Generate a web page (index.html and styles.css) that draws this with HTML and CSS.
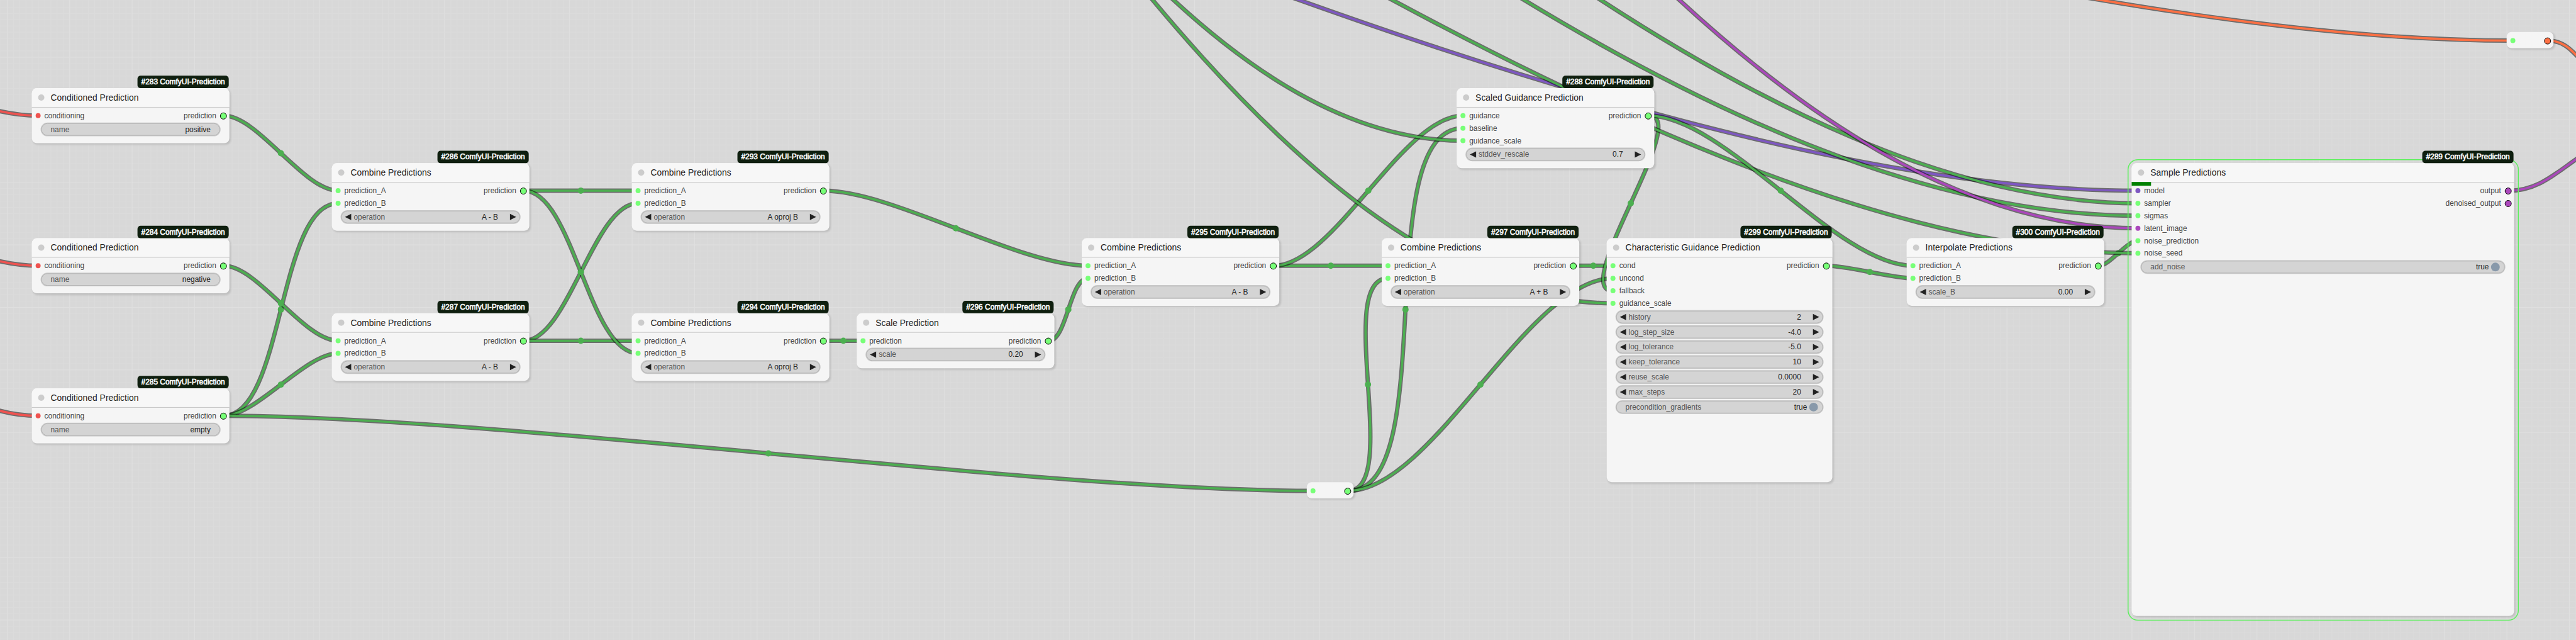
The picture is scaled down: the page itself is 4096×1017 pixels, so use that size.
FILE: index.html
```html
<!DOCTYPE html>
<html lang="en">
<head>
<meta charset="utf-8">
<title>Node graph</title>
<link rel="stylesheet" href="styles.css">
</head>
<body>
<main class="graph">
  <svg class="links" id="links" width="4124" height="1026"></svg>

  <section class="node n283">
    <span class="badge">#283 ComfyUI-Prediction</span>
    <h2 class="title">Conditioned Prediction</h2>
    <div class="body">
      <div class="slots"><ul class="inputs"><li class="cond">conditioning</li></ul><ul class="outputs"><li>prediction</li></ul></div>
      <div class="widgets"><div class="widget text"><span>name</span><b>positive</b></div></div>
    </div>
  </section>

  <section class="node n284">
    <span class="badge">#284 ComfyUI-Prediction</span>
    <h2 class="title">Conditioned Prediction</h2>
    <div class="body">
      <div class="slots"><ul class="inputs"><li class="cond">conditioning</li></ul><ul class="outputs"><li>prediction</li></ul></div>
      <div class="widgets"><div class="widget text"><span>name</span><b>negative</b></div></div>
    </div>
  </section>

  <section class="node n285">
    <span class="badge">#285 ComfyUI-Prediction</span>
    <h2 class="title">Conditioned Prediction</h2>
    <div class="body">
      <div class="slots"><ul class="inputs"><li class="cond">conditioning</li></ul><ul class="outputs"><li>prediction</li></ul></div>
      <div class="widgets"><div class="widget text"><span>name</span><b>empty</b></div></div>
    </div>
  </section>

  <section class="node n286">
    <span class="badge">#286 ComfyUI-Prediction</span>
    <h2 class="title">Combine Predictions</h2>
    <div class="body">
      <div class="slots"><ul class="inputs"><li>prediction_A</li><li>prediction_B</li></ul><ul class="outputs"><li>prediction</li></ul></div>
      <div class="widgets"><div class="widget stepper"><span>operation</span><b>A - B</b></div></div>
    </div>
  </section>

  <section class="node n287">
    <span class="badge">#287 ComfyUI-Prediction</span>
    <h2 class="title">Combine Predictions</h2>
    <div class="body">
      <div class="slots"><ul class="inputs"><li>prediction_A</li><li>prediction_B</li></ul><ul class="outputs"><li>prediction</li></ul></div>
      <div class="widgets"><div class="widget stepper"><span>operation</span><b>A - B</b></div></div>
    </div>
  </section>

  <section class="node n293">
    <span class="badge">#293 ComfyUI-Prediction</span>
    <h2 class="title">Combine Predictions</h2>
    <div class="body">
      <div class="slots"><ul class="inputs"><li>prediction_A</li><li>prediction_B</li></ul><ul class="outputs"><li>prediction</li></ul></div>
      <div class="widgets"><div class="widget stepper"><span>operation</span><b>A oproj B</b></div></div>
    </div>
  </section>

  <section class="node n294">
    <span class="badge">#294 ComfyUI-Prediction</span>
    <h2 class="title">Combine Predictions</h2>
    <div class="body">
      <div class="slots"><ul class="inputs"><li>prediction_A</li><li>prediction_B</li></ul><ul class="outputs"><li>prediction</li></ul></div>
      <div class="widgets"><div class="widget stepper"><span>operation</span><b>A oproj B</b></div></div>
    </div>
  </section>

  <section class="node n296">
    <span class="badge">#296 ComfyUI-Prediction</span>
    <h2 class="title">Scale Prediction</h2>
    <div class="body">
      <div class="slots"><ul class="inputs"><li>prediction</li></ul><ul class="outputs"><li>prediction</li></ul></div>
      <div class="widgets"><div class="widget stepper"><span>scale</span><b>0.20</b></div></div>
    </div>
  </section>

  <section class="node n295">
    <span class="badge">#295 ComfyUI-Prediction</span>
    <h2 class="title">Combine Predictions</h2>
    <div class="body">
      <div class="slots"><ul class="inputs"><li>prediction_A</li><li>prediction_B</li></ul><ul class="outputs"><li>prediction</li></ul></div>
      <div class="widgets"><div class="widget stepper"><span>operation</span><b>A - B</b></div></div>
    </div>
  </section>

  <section class="node reroute r1">
    <div class="body"><div class="slots"><ul class="inputs"><li></li></ul><ul class="outputs"><li></li></ul></div></div>
  </section>

  <section class="node n297">
    <span class="badge">#297 ComfyUI-Prediction</span>
    <h2 class="title">Combine Predictions</h2>
    <div class="body">
      <div class="slots"><ul class="inputs"><li>prediction_A</li><li>prediction_B</li></ul><ul class="outputs"><li>prediction</li></ul></div>
      <div class="widgets"><div class="widget stepper"><span>operation</span><b>A + B</b></div></div>
    </div>
  </section>

  <section class="node n288">
    <span class="badge">#288 ComfyUI-Prediction</span>
    <h2 class="title">Scaled Guidance Prediction</h2>
    <div class="body">
      <div class="slots"><ul class="inputs"><li>guidance</li><li>baseline</li><li>guidance_scale</li></ul><ul class="outputs"><li>prediction</li></ul></div>
      <div class="widgets"><div class="widget stepper"><span>stddev_rescale</span><b>0.7</b></div></div>
    </div>
  </section>

  <section class="node n299">
    <span class="badge">#299 ComfyUI-Prediction</span>
    <h2 class="title">Characteristic Guidance Prediction</h2>
    <div class="body">
      <div class="slots"><ul class="inputs"><li>cond</li><li>uncond</li><li>fallback</li><li>guidance_scale</li></ul><ul class="outputs"><li>prediction</li></ul></div>
      <div class="widgets">
        <div class="widget stepper"><span>history</span><b>2</b></div>
        <div class="widget stepper"><span>log_step_size</span><b>-4.0</b></div>
        <div class="widget stepper"><span>log_tolerance</span><b>-5.0</b></div>
        <div class="widget stepper"><span>keep_tolerance</span><b>10</b></div>
        <div class="widget stepper"><span>reuse_scale</span><b>0.0000</b></div>
        <div class="widget stepper"><span>max_steps</span><b>20</b></div>
        <div class="widget toggle"><span>precondition_gradients</span><b>true</b></div>
      </div>
    </div>
  </section>

  <section class="node n300">
    <span class="badge">#300 ComfyUI-Prediction</span>
    <h2 class="title">Interpolate Predictions</h2>
    <div class="body">
      <div class="slots"><ul class="inputs"><li>prediction_A</li><li>prediction_B</li></ul><ul class="outputs"><li>prediction</li></ul></div>
      <div class="widgets"><div class="widget stepper"><span>scale_B</span><b>0.00</b></div></div>
    </div>
  </section>

  <section class="node n289">
    <i class="selection"></i>
    <span class="badge">#289 ComfyUI-Prediction</span>
    <h2 class="title">Sample Predictions</h2>
    <div class="body">
      <i class="progress"></i>
      <div class="slots">
        <ul class="inputs"><li class="model">model</li><li>sampler</li><li>sigmas</li><li class="latent">latent_image</li><li>noise_prediction</li><li>noise_seed</li></ul>
        <ul class="outputs"><li class="latent">output</li><li class="latent">denoised_output</li></ul>
      </div>
      <div class="widgets"><div class="widget toggle"><span>add_noise</span><b>true</b></div></div>
    </div>
  </section>

  <section class="node reroute r2">
    <div class="body"><div class="slots"><ul class="inputs"><li></li></ul><ul class="outputs"><li class="vae"></li></ul></div></div>
  </section>
</main>
<script src="script.js"></script>
</body>
</html>
```
FILE: styles.css
```css
* { box-sizing: border-box; }

body {
  margin: 0;
  overflow: hidden;
  background: #d8d8d8;
  font-family: "Liberation Sans", Arial, sans-serif;
}

ul, h2 { margin: 0; padding: 0; list-style: none; font-weight: normal; }
b { font-weight: normal; }

/* The canvas is drawn at the current zoom level. */
.graph {
  position: relative;
  width: 4124px;
  height: 1026px;
  transform: scale(0.99369);
  transform-origin: 0 0;
  background-color: #d8d8d8;
  background-image:
    linear-gradient(to right, #dfdfdf 1px, transparent 1px),
    linear-gradient(to bottom, #dfdfdf 1px, transparent 1px),
    linear-gradient(to right, #dbdbdb 1px, transparent 1px),
    linear-gradient(to bottom, #dbdbdb 1px, transparent 1px);
  background-size: 100px 100px, 100px 100px, 10px 10px, 10px 10px;
  background-position: 11px 91px, 11px 91px, 1px 1px, 1px 1px;
}

.links { position: absolute; left: 0; top: 0; fill: none; }
.links .shadow { stroke: #000; stroke-opacity: .5; stroke-width: 7; }
.links .line { stroke: currentColor; stroke-width: 3.5; }
.links circle { fill: currentColor; }
.links .green { color: #4caf50; }
.links .red { color: #ef5350; }
.links .purple { color: #7e57c2; }
.links .pink { color: #ab47bc; }
.links .orange { color: #ff7043; }

.node {
  position: absolute;
  display: flex;
  flex-direction: column;
  width: 316px;
  background: #f5f5f5;
  border-radius: 8px;
  box-shadow: 2px 2px 3px rgba(0, 0, 0, .12);
}

.n283 { left: 51px; top: 141px; height: 88px; }
.n284 { left: 51px; top: 381px; height: 88px; }
.n285 { left: 51px; top: 621px; height: 88px; }
.n286 { left: 531px; top: 261px; height: 108px; }
.n287 { left: 531px; top: 501px; height: 108px; }
.n293 { left: 1011px; top: 261px; height: 108px; }
.n294 { left: 1011px; top: 501px; height: 108px; }
.n296 { left: 1371px; top: 501px; height: 88px; }
.n295 { left: 1731px; top: 381px; height: 108px; }
.n297 { left: 2211px; top: 381px; height: 108px; }
.n288 { left: 2331px; top: 141px; height: 128px; }
.n299 { left: 2571px; top: 381px; width: 361px; height: 390px; }
.n300 { left: 3051px; top: 381px; height: 108px; }
.n289 { left: 3411px; top: 261px; width: 612px; height: 724px; }
.reroute { width: 75px; height: 26px; }
.r1 { left: 2091px; top: 771px; }
.r2 { left: 4011px; top: 51px; }

.badge {
  position: absolute;
  right: 1px;
  bottom: 100%;
  height: 20px;
  padding: 0 6px;
  border-radius: 5px;
  background: #0f1f0f;
  color: #fff;
  font-size: 12px;
  line-height: 20px;
  white-space: nowrap;
  -webkit-text-stroke: .55px #fff;
}

.title {
  display: flex;
  align-items: center;
  gap: 10px;
  height: 30px;
  padding-left: 10px;
  border-radius: 8px 8px 0 0;
  background: #f7f7f7;
  color: #222;
  font-size: 14px;
  line-height: 30px;
  white-space: nowrap;
}
.title::before { content: ""; width: 10px; height: 10px; border-radius: 50%; background: #ccc; }

.body { position: relative; border-top: 1px solid #c4c4c4; }
.reroute .body { border-top: 0; }

.slots {
  display: flex;
  justify-content: space-between;
  padding: 3px 4.5px 2px 6px;
  color: #444;
  font-size: 12px;
  line-height: 22px;
}
.reroute .slots { padding-top: 4px; }
.slots li { display: flex; align-items: center; height: 20px; color: #444; }
.inputs li { gap: 6px; }
.outputs li { gap: 5.5px; justify-content: flex-end; }
.inputs li::before,
.outputs li::after {
  content: "";
  flex: none;
  border-radius: 50%;
  background: #7f7;
}
.inputs li::before { width: 8px; height: 8px; }
.outputs li::after { width: 9px; height: 9px; border: 1px solid #000; }
.inputs .cond::before { background: #ef5350; }
.inputs .model::before { background: #7e57c2; }
.inputs .latent::before,
.outputs .latent::after { background: #ab47bc; }
.outputs .vae::after { background: #ff7043; }

.widgets { display: flex; flex-direction: column; gap: 4px; padding: 0 15px; }

.widget {
  display: flex;
  align-items: center;
  height: 20px;
  border: 1px solid #b4b4b4;
  border-radius: 10px;
  box-shadow: 0 0 0 1px #cacaca;
  background: #d4d4d4;
  color: #222;
  font-size: 12px;
  line-height: 20px;
  white-space: nowrap;
}
.widget span { flex: 1; color: #555; }
.widget.text { padding: 0 14px; }

.stepper { gap: 4px; padding: 0 5px; }
.stepper b { margin-right: 15px; }
.stepper::before,
.stepper::after { content: ""; border: 5px solid transparent; }
.stepper::before { border-right: 10px solid #222; border-left: 0; }
.stepper::after { border-left: 10px solid #222; border-right: 0; }

.toggle { gap: 3px; padding: 0 7px 0 14px; }
.toggle::after { content: ""; width: 14.4px; height: 14.4px; border-radius: 50%; background: #89a; }

.selection {
  position: absolute;
  inset: -5.5px;
  border-radius: 15px;
  box-shadow: 0 0 0 1.5px #5cf05c;
}

.progress { position: absolute; left: 0; top: -1px; width: 5%; height: 6px; background: #008000; }
```
FILE: script.js
```js
// Link endpoints in canvas units: colour, output x/y, input x/y.
const links = [
  ['green', 358, 185, 541, 305],
  ['green', 358, 665, 541, 325],
  ['green', 358, 425, 541, 545],
  ['green', 358, 665, 541, 565],
  ['green', 838, 305, 1021, 305],
  ['green', 838, 545, 1021, 325],
  ['green', 838, 545, 1021, 545],
  ['green', 838, 305, 1021, 565],
  ['green', 1318, 545, 1381, 545],
  ['green', 1318, 305, 1741, 425],
  ['green', 1678, 545, 1741, 445],
  ['green', 358, 665, 2101, 785],
  ['green', 2038, 425, 2221, 425],
  ['green', 2157, 785, 2221, 445],
  ['purple', -1588.8, -1223.5, 3421, 305],
  ['green', 2038, 425, 2341, 185],
  ['green', 2157, 785, 2341, 205],
  ['green', -1.5, -2102, 2341, 225],
  ['green', 2518, 425, 2581, 425],
  ['green', 2157, 785, 2581, 445],
  ['green', 2638, 185, 2581, 465],
  ['green', -0.2, -2031.5, 2581, 485],
  ['green', -563.4, -2154, 3421, 325],
  ['green', -1396.1, -2533.3, 3421, 345],
  ['pink', -31.8, -2831.4, 3421, 365],
  ['green', 3358, 425, 3421, 385],
  ['green', -678.8, -1407.8, 3421, 405],
  ['green', 2638, 185, 3061, 425],
  ['green', 2923, 425, 3061, 445],
  ['orange', -847.3, -919.1, 4021, 65],
];

// Links that leave the visible area close to their node.
const loose = [
  ['red', 'M-4 177C18 182 40 185 61 185'],
  ['red', 'M-4 417C18 422 40 425 61 425'],
  ['red', 'M-4 656C18 662 40 665 61 665'],
  ['orange', 'M4078 65C4100 65 4113 78 4126 92'],
  ['pink', 'M4014 305C4062 305 4092 275 4126 252'],
];

const drawn = loose.map(([color, d]) =>
  `<g class="${color}"><path class="shadow" d="${d}"/><path class="line" d="${d}"/></g>`);

for (const [color, ax, ay, bx, by] of links) {
  const reach = Math.hypot(bx - ax, by - ay) * 0.25;
  const d = `M${ax} ${ay}C${ax + reach} ${ay} ${bx - reach} ${by} ${bx} ${by}`;
  drawn.push(`<g class="${color}"><path class="shadow" d="${d}"/><path class="line" d="${d}"/>` +
    `<circle cx="${(ax + bx) / 2}" cy="${(ay + by) / 2}" r="5"/></g>`);
}

document.getElementById('links').innerHTML = drawn.join('');
```
